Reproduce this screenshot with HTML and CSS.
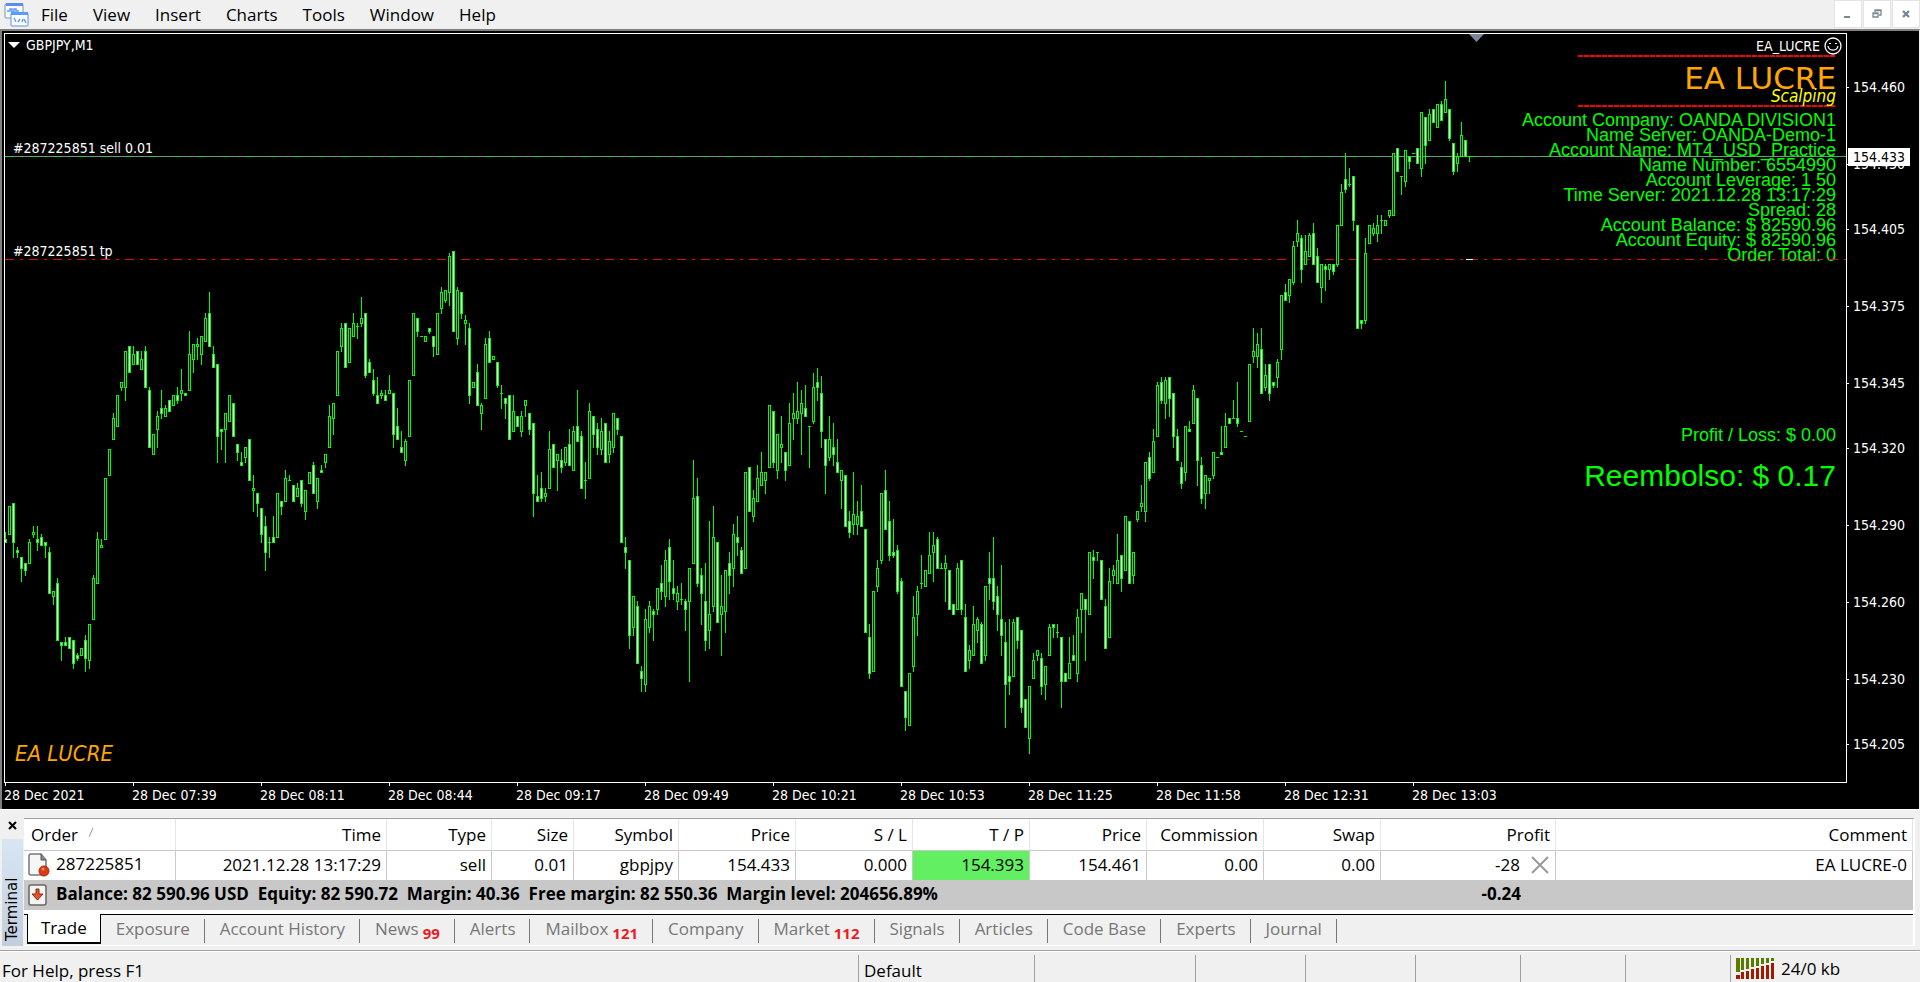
FILE: index.html
```html
<!DOCTYPE html>
<html lang="en">
<head>
<meta charset="utf-8">
<title>GBPJPY,M1</title>
<link rel="stylesheet" href="styles.css">
</head>
<body>
<div class="app">
  <header class="menubar">
    <svg class="app-icon" width="26" height="26" viewBox="0 0 26 26" aria-hidden="true">
      <rect x="1" y="2" width="18" height="14" rx="1" fill="#fff" stroke="#6f97a8"/>
      <path d="M2 1h17v3H2z" fill="#5b8def"/>
      <path d="M3 9h3v-2h2v3h2v-3h2v2h3" fill="none" stroke="#5b9bff" stroke-width="1.5"/>
      <rect x="7" y="11" width="17" height="13" rx="1" fill="#fff" stroke="#5b8def"/>
      <path d="M7 10h17v3H7z" fill="#5b9bff"/>
      <path d="M10 16l2 4M14 20l2-3M18 20l1-3M20 17l2 4" fill="none" stroke="#5b9bff" stroke-width="1.4"/>
    </svg>
    <nav class="menus">
      <button type="button">File</button>
      <button type="button">View</button>
      <button type="button">Insert</button>
      <button type="button">Charts</button>
      <button type="button">Tools</button>
      <button type="button">Window</button>
      <button type="button">Help</button>
    </nav>
    <div class="win-buttons">
      <button type="button" aria-label="Minimize"><svg width="10" height="10" viewBox="0 0 10 10"><path d="M1 7h6v2H1z" fill="#778899"/></svg></button>
      <button type="button" aria-label="Restore"><svg width="10" height="10" viewBox="0 0 10 10"><path d="M3 3V1h6v5H7M3 1.500h6" fill="none" stroke="#778899" stroke-width="1.300"/><path d="M1 4h5v4H1zM1 4.500h5" fill="none" stroke="#778899" stroke-width="1.300"/></svg></button>
      <button type="button" aria-label="Close"><svg width="10" height="10" viewBox="0 0 10 10"><path d="M2 2l6 6M8 2l-6 6" stroke="#778899" stroke-width="2.400"/></svg></button>
    </div>
  </header>

  <main class="chart">
    <div class="plot">
      <div class="chart-title"><svg width="12" height="6" viewBox="0 0 12 6" aria-hidden="true"><path d="M0 0h12l-6 6z" fill="#fff"/></svg>GBPJPY,M1</div>
      <span class="order-label order-open">#287225851 sell 0.01</span>
      <span class="order-label order-tp">#287225851 tp</span>
      <span class="brand">EA LUCRE</span>

      <section class="expert">
        <div class="expert-name">EA_LUCRE
          <svg width="18" height="18" viewBox="0 0 18 18" aria-hidden="true"><circle cx="9" cy="9" r="8" fill="none" stroke="#fff" stroke-width="1.300"/><path d="M5 6h2v1H5zM11 6h2v1h-2z" fill="#fff"/><path d="M4 9c1 5.500 9 5.500 10 0" fill="none" stroke="#fff" stroke-width="1.300"/></svg>
        </div>
        <div class="logo">
          <span class="logo-main">EA LUCRE</span>
          <span class="logo-sub">Scalping</span>
        </div>
        <ul class="facts">
          <li>Account Company: OANDA DIVISION1</li>
          <li>Name Server: OANDA-Demo-1</li>
          <li>Account Name: MT4_USD_Practice</li>
          <li>Name Number: 6554990</li>
          <li>Account Leverage: 1 50</li>
          <li>Time Server: 2021.12.28 13:17:29</li>
          <li>Spread: 28</li>
          <li>Account Balance: $ 82590.96</li>
          <li>Account Equity: $ 82590.96</li>
          <li>Order Total: 0</li>
        </ul>
      </section>
      <section class="result">
        <div class="profit">Profit / Loss: $ 0.00</div>
        <div class="refund">Reembolso: $ 0.17</div>
      </section>

      <svg class="candles" width="100%" height="100%" shape-rendering="crispEdges" role="img" aria-label="GBPJPY one minute candles">
        <line x1="0" x2="100%" y1="122.500" y2="122.500" stroke="#778899"/>
        <line x1="0" x2="100%" y1="122.500" y2="122.500" stroke="#32cd32" stroke-dasharray="9 6 3 6"/>
        <line x1="0" x2="100%" y1="225.500" y2="225.500" stroke="#e01010" stroke-dasharray="9 6 3 6"/>
        <path id="edges" fill="#00ff00"/>
        <path id="hollow" fill="#000"/>
        <path id="solid" fill="#fff"/>
        <path d="M1461 225h7v1h-7z" fill="#fff"/>
        <path d="M1464 0h15l-7.500 8z" fill="#778899" shape-rendering="auto"/>
      </svg>
    </div>
    <div class="price-axis" id="prices"></div>
    <div class="time-axis" id="times"></div>
  </main>

  <section class="terminal">
    <aside class="terminal-side">
      <button type="button" class="terminal-close" aria-label="Close terminal"><svg width="9" height="9" viewBox="0 0 9 9"><path d="M1 1l7 7M8 1l-7 7" stroke="#000" stroke-width="2"/></svg></button>
      <div class="terminal-title">Terminal</div>
    </aside>
    <div class="terminal-body">
      <table class="orders">
        <colgroup><col class="c-order"><col class="c-time"><col class="c-type"><col class="c-size"><col class="c-symbol"><col class="c-num"><col class="c-num"><col class="c-num"><col class="c-num"><col class="c-num"><col class="c-num"><col class="c-profit"><col></colgroup>
        <thead>
          <tr><th>Order <svg class="sort" width="5" height="9" viewBox="0 0 5 9" aria-hidden="true"><path d="M0 9l4-9" stroke="#999" fill="none"/></svg></th><th>Time</th><th>Type</th><th>Size</th><th>Symbol</th><th>Price</th><th>S / L</th><th>T / P</th><th>Price</th><th>Commission</th><th>Swap</th><th>Profit</th><th>Comment</th></tr>
        </thead>
        <tbody>
          <tr>
            <td><span class="cell-icon"><svg width="22" height="24" viewBox="0 0 22 24" aria-hidden="true"><path d="M1 3q0-2 2-2h10l5 6v13q0 2-2 2H3q-2 0-2-2z" fill="#f6f6f6" stroke="#777" stroke-width="1.500"/><path d="M13 1v6h5" fill="#888" stroke="#555"/><circle cx="16" cy="18" r="5" fill="#dc3a12" stroke="#a82a0c"/><circle cx="15" cy="16" r="1.500" fill="#f08a60"/></svg></span>287225851</td>
            <td>2021.12.28 13:17:29</td><td>sell</td><td>0.01</td><td>gbpjpy</td><td>154.433</td><td>0.000</td><td class="tp-hit">154.393</td><td>154.461</td><td>0.00</td><td>0.00</td>
            <td class="profit-cell">-28<button type="button" class="close-order" aria-label="Close order"><svg width="18" height="18" viewBox="0 0 18 18"><path d="M1 1l16 16M17 1L1 17" stroke="#999" stroke-width="2"/></svg></button></td>
            <td>EA LUCRE-0</td>
          </tr>
          <tr class="summary">
            <td colspan="11"><span class="cell-icon"><svg width="19" height="22" viewBox="0 0 19 22" aria-hidden="true"><rect x="1" y="1" width="17" height="20" rx="2" fill="#f4f4f4" stroke="#666" stroke-width="1.500"/><path d="M8 5h3v5h4l-5.500 6L4 10h4z" fill="#e2572a" stroke="#8c2a0c"/></svg></span><span class="balance">Balance: 82 590.96 USD  Equity: 82 590.72  Margin: 40.36  Free margin: 82 550.36  Margin level: 204656.89%</span></td>
            <td class="profit-cell">-0.24</td><td></td>
          </tr>
        </tbody>
      </table>
      <div class="tabs" role="tablist">
        <button type="button" role="tab" class="active" aria-selected="true">Trade</button>
        <button type="button" role="tab">Exposure</button>
        <button type="button" role="tab">Account History</button>
        <button type="button" role="tab">News<b>99</b></button>
        <button type="button" role="tab">Alerts</button>
        <button type="button" role="tab">Mailbox<b>121</b></button>
        <button type="button" role="tab">Company</button>
        <button type="button" role="tab">Market<b>112</b></button>
        <button type="button" role="tab">Signals</button>
        <button type="button" role="tab">Articles</button>
        <button type="button" role="tab">Code Base</button>
        <button type="button" role="tab">Experts</button>
        <button type="button" role="tab">Journal</button>
      </div>
    </div>
  </section>

  <footer class="status">
    <span class="s-help">For Help, press F1</span>
    <span class="s-profile">Default</span>
    <span class="s-time"></span>
    <span class="s-wide"></span>
    <span class="s-wide"></span>
    <span class="s-cell"></span>
    <span class="s-cell"></span>
    <span class="s-cell"></span>
    <span class="s-net">
      <svg width="38" height="21" viewBox="0 0 38 21" aria-hidden="true">
        <path d="M0 0h4v14H0zM5 0h3v12H5zM10 0h3v11h-3zM15 0h3v9h-3zM20 0h3v8h-3zM25 0h3v6h-3zM30 0h3v5h-3zM35 0h3v3h-3z" fill="#5a7a00"/>
        <path d="M0 17h4v4H0zM5 14h3v7H5zM10 13h3v8h-3zM15 11h3v10h-3zM20 10h3v11h-3zM25 8h3v13h-3zM30 7h3v14h-3zM35 5h3v16h-3z" fill="#a01a00"/>
      </svg>
      24/0 kb
    </span>
  </footer>
</div>
<script src="chart.js"></script>
</body>
</html>
```

FILE: styles.css
```css
* { box-sizing: border-box; }

body {
  margin: 0;
  background: #f0f0f0;
  color: #000;
  font: 17px/24px "Open Sans", "Noto Sans", sans-serif;
}

button {
  margin: 0;
  padding: 0;
  border: 0;
  background: none;
  color: inherit;
  font: inherit;
}

svg { flex: none; }

.app {
  display: flex;
  flex-direction: column;
  min-height: 100vh;
}

/* Menu bar */
.menubar {
  display: flex;
  height: 29px;
  align-items: center;
  padding-left: 4px;
}

.app-icon { margin-right: 11px; }

.menus {
  display: flex;
  flex: 1;
  gap: 25px;
}

.win-buttons {
  display: flex;
  align-self: flex-start;
  gap: 1px;
}

.win-buttons button {
  display: grid;
  place-items: center;
  width: 28px;
  height: 28px;
  border: 1px solid #e3e3e3;
  background: #fff;
}

/* Chart window */
.chart {
  display: grid;
  flex: 1;
  grid-template: 1fr 26px / 1fr 72px;
  min-height: 600px;
  padding: 2px 0 0 2px;
  border-top: 2px solid #808080;
  border-left: 2px solid #808080;
  border-right: 1px solid #f0f0f0;
  background: #000;
  color: #fff;
  font: 14px/18px "DejaVu Sans Condensed", "Noto Sans", sans-serif;
}

.plot {
  position: relative;
  overflow: hidden;
  border: 1px solid #fff;
}

.candles {
  position: absolute;
  inset: 0;
  pointer-events: none;
}

.chart-title {
  display: flex;
  align-items: center;
  gap: 6px;
  padding: 2px 3px;
}

.order-label {
  position: absolute;
  left: 8px;
}

.order-open { top: 105px; }
.order-tp { top: 208px; }

.brand {
  position: absolute;
  left: 10px;
  bottom: 13px;
  color: #ffa500;
  font: italic 22px/30px "DejaVu Sans Condensed", sans-serif;
}

.expert {
  position: absolute;
  top: 3px;
  right: 10px;
  display: flex;
  flex-direction: column;
  align-items: flex-end;
}

.expert-name {
  display: flex;
  align-items: center;
  gap: 4px;
  margin-right: -6px;
}

.logo {
  position: relative;
  display: flex;
  justify-content: flex-end;
  width: 258px;
  height: 52px;
  background:
    repeating-linear-gradient(90deg, #f00 0 5px, transparent 5px 6px) 0 0 / 100% 2px no-repeat,
    repeating-linear-gradient(90deg, #f00 0 5px, transparent 5px 6px) 0 100% / 100% 2px no-repeat;
}

.logo-main {
  color: #ffa500;
  font: 31px/46px "DejaVu Sans", sans-serif;
}

.logo-sub {
  position: absolute;
  right: 0;
  bottom: 0;
  color: #ff0;
  font: italic 17px/22px "DejaVu Sans Condensed", sans-serif;
}

.facts {
  margin: 6px 0 0;
  padding: 0;
  list-style: none;
  color: #0f0;
  font: 18px/15px "Liberation Sans", sans-serif;
  text-align: right;
}

.result {
  position: absolute;
  top: 390px;
  right: 10px;
  color: #0f0;
  font: 18px/22px "Liberation Sans", sans-serif;
  text-align: right;
}

.refund {
  margin-top: 13px;
  font-size: 30px;
  line-height: 34px;
}

.price-axis { position: relative; }

.price {
  position: absolute;
  left: 0;
  display: flex;
  align-items: center;
  gap: 4px;
}

.price::before {
  width: 2px;
  height: 1px;
  background: #fff;
  content: "";
}

.bid {
  position: absolute;
  left: 1px;
  width: 62px;
  padding-left: 5px;
  background: #fff;
  color: #000;
}

.time-axis {
  display: flex;
  grid-column: 1 / -1;
  overflow: hidden;
  white-space: nowrap;
}

.time-axis span {
  flex: none;
  width: 128px;
}

.time-axis span::before {
  display: block;
  width: 1px;
  height: 3px;
  margin-left: 1px;
  background: #fff;
  content: "";
}

/* Terminal */
.terminal {
  display: flex;
  height: 137px;
  padding: 8px 5px 0 2px;
  border-top: 1px solid #fff;
}

.terminal-side {
  display: flex;
  flex-direction: column;
  width: 22px;
  padding-right: 1px;
}

.terminal-close {
  display: grid;
  place-items: start center;
  height: 21px;
  padding-top: 3px;
}

.terminal-title {
  flex: 1;
  padding-top: 5px;
  background: linear-gradient(#c2cedd, #d8e6f4);
  font: 15px/21px "DejaVu Sans", sans-serif;
  transform: rotate(180deg);
  writing-mode: vertical-rl;
}

.terminal-body {
  flex: 1;
  min-width: 0;
  border-top: 1px solid #a0a0a0;
  border-right: 2px solid #fff;
  border-bottom: 1px solid #fff;
}

.orders {
  width: 100%;
  border-collapse: separate;
  border-spacing: 0;
  background: #fff;
  table-layout: fixed;
  white-space: nowrap;
}

.c-order { width: 152px; }
.c-time { width: 211px; }
.c-type { width: 105px; }
.c-size { width: 82px; }
.c-symbol { width: 105px; }
.c-num { width: 117px; }
.c-profit { width: 175px; }

.orders th,
.orders td {
  padding: 0 5px;
  font-weight: 400;
  text-align: right;
}

.orders th {
  height: 32px;
  border-right: 1px solid #e5e5e5;
  border-bottom: 1px solid #c8c8c8;
}

.orders td {
  height: 29px;
  padding-bottom: 2px;
  border-right: 1px solid #c8c8c8;
}

.orders th:first-child,
.orders td:first-child { text-align: left; }

.orders th:first-child { padding-left: 7px; }
.orders td:first-child { padding-left: 4px; }

.sort {
  margin: 0 0 4px 7px;
}

.cell-icon {
  display: inline-flex;
  width: 28px;
  vertical-align: middle;
}

.orders td.tp-hit { background: #62f062; }

.orders td.profit-cell { padding-right: 35px; position: relative; }

.close-order {
  position: absolute;
  top: 5px;
  right: 6px;
  display: flex;
}

.orders .summary td {
  height: 30px;
  border: 0;
  background: #c8c8c8;
  font-weight: 700;
}

.balance { white-space: pre; }

.tabs {
  display: flex;
  height: 34px;
  padding: 4px 0 0 3px;
  background: linear-gradient(#fff 4px, #000 4px 5px, transparent 5px);
  color: #777;
}

.tabs button {
  position: relative;
  height: 30px;
  padding: 0 15px;
}

.tabs button + button::after {
  position: absolute;
  top: 5px;
  right: 0;
  width: 1px;
  height: 24px;
  background: #777;
  content: "";
}

.tabs .active {
  padding: 0 13px;
  border: solid #000;
  border-width: 0 1px 2px;
  background: #fff;
  color: #000;
}

.tabs b {
  position: relative;
  top: 4px;
  margin-left: 4px;
  color: #ed1c24;
  font-size: 15px;
  line-height: 16px;
}

/* Status bar */
.status {
  display: flex;
  height: 32px;
  margin-top: 4px;
  padding-top: 4px;
  border-top: 1px solid #a0a0a0;
  box-shadow: inset 0 1px #fff;
}

.status span {
  padding-left: 5px;
  border-left: 1px solid #a0a0a0;
  line-height: 31px;
}

.status .s-help {
  flex: 1;
  padding-left: 2px;
  border-left: 0;
}

.s-profile { width: 176px; }
.s-time { width: 161px; }
.s-wide { width: 110px; }
.s-cell { width: 105px; }

.s-net {
  display: flex;
  align-items: center;
  gap: 7px;
  width: 190px;
}
```

FILE: chart.js
```js
// Each run starts at candle `at`; y values are thirds of a pixel below `base`.
// Row: kind, body top, body bottom, high, low. u = rising, d = falling, x = doji.
const runs = [
  { at: 0, base: 446, rows: `d177 189 156;u78 165;d69 189 69 234;d210 219 201 234;d231 267 231 306;d249 273 249 288;u186 252 177;u156 165 138 174;d177 189 138 213;d171 198 162;d186 198 186 234;d216 342 201;u333 351 333 375;d309 483 294;d486 498 486 543;d486 498 471;d471 507;d480 552 480 567;d525 537 519 543;u504 528;d480 537 465 576;u432 543 432 567;u294 420 285;u177 312 156;u195 204 177` },
  { at: 25, base: 166, rows: `u834 1020;u747 828;u654 720 639;u585 681;u546 564 546 573;u453 564 453 603;d438 519;u462 495 438;d453 495;u477 510 453;d453 564 438;d570 744 561;u702 765;u648 690 633 744;d624 642 570 657;u624 651 615;d600 636;u585 618;d585 603 561 612;u570 582 507 603;d579 588;u462 573 393;u432 480 432 519;u432 441 414 480;u408 465 408 495;u354 426 339;d339 441 276;d462 504 438;d492 711 492 789;d687 696 687 750;u639 690 639 789;u585 666;d609 711;d732 759 732 783;d786 798 756;u741 774 741 789;d717 843;u864 873 825 936;d879 912 879 951;d924 1005 924 1029;d978 1059 948 1113;x1026 1029 1011 1074;d1011 1029 948;u879 1014;d903 921 903 945;u834 906 810;x840 843 825;d855 906;u864 891 849;d840 912 840 921;u870 936 870 960` },
  { at: 76, base: 206, rows: `u696 732;d675 762 666;u714 786 714 807;d690 699 675;u642 669 642 684;u528 624 495;u489 537 489 585;u333 468;u264 321 249 336;d249 384;u264 369;u249 291 219;x258 261 249 297;u234 252 171 261;d219 408 219 414;d366 399 357;d420 462 387 468;d465 492 411;u459 468 450 477;d465 483 450;u450 462 405;d459 585 459 624;d558 600 504;d621 639 573;u603 663 597 678;u420 591;u219 408;d234 276 234 291;x288 291;u288 306;d264 276 264 282;d288 321 288 351;u219 345;u156 207 141 222;u150 183 150 189;u48 159 39 198;d33 276;u150 297 141 315;d156 222 156 237;u240 252 225 315;d264 468 249 492;u426 444;d396 498 372;u495 522 489 570;u312 477 294;d294 369 273;u348 360;d366 438 366 444;x459 462 435 507;d474 492 474 537;d465 600;u513 576 465;d528 561;u528 576 513 591;u480 498 480 531;d519 570 519 585;d549 762 549 831;d768 786 705;d744 777 696 786;u759 771 744 786;u627 747 573;d612 684;u642 663 642 753;d660 684 627 699;u621 669 621 678;d612 678 567;u573 693 558;d558 606 450;d588 747 573;x720 723 666 777;u513 717 489;d528 585 528 624;d567 624 549 645;u573 630 534 645;d549 669;u603 645 573 669;u519 624 519 639;d534 570 534 585` },
  { at: 154, base: 346, rows: `d168 489;d501 519 471 567;d540 768 540 807;u648 744 648 768;d678 852 663;d873 897 858 936;u717 915 687 936;u678 744 663 759;d693 705 687 783;u624 690 624 705;d609 636 555 660;u540 651 510 681;d501 606 477 660;d624 642 540 660;u639 666 618 690;x657 660 609 675;d663 690 657 753;u564 666 564 906;u354 552 240;d348 612 294 621;d585 642 564 735;d663 783 549 813;u702 753 423 807;u471 681 378 696;d486 729;u678 705 585 828;u570 696 570 759;d549 588 516 642;u462 567 432 621;d471 489 408 528;d510 582 501;u276 567;d261 396;u354 411 330 426;u294 366 255;u276 318 216;u276 303 276 342;u75 264;d93 249 93 264;u162 273 162 297;u192 204 108 249;d216 273 216 303;u129 258 69;u99 117 39 180;u93 117 6 132;u69 102 30 225;d84 111 15;x138 141 138 264;u21 126 -21 132;d6 24 -36 63;d39 156 -12 204;d177 258 177 342;u177 234 108 243;d201 225 129 258;d246 279 177;u270 303 270 387;d285 441;d423 459 393 474;u402 435 276 465;u408 435 363 465;d393 441 315;d447 759;d771 882 732 897;u633 876;u564 621 540 636;u339 543 339 552;d330 450 270;d423 528 363 543;d516 528 417 534;d510 636 495 642` },
  { at: 224, base: 346, rows: `d603 921 594;d933 1014 933 1053;u879 1038;u711 861 648 876;u633 705 618 768;x609 612 525 627;u570 621;u525 582 456;u495 519 456 606;d477 567 471;x564 567 549;u549 567 525 666;d570 690;d672 705;u564 690 549;d540 690 540 705;d711 876 672;u810 843 795 867;u732 828 678;u717 753 711 789;d732 852 726;u618 828 618 843;d594 612 516 660;d594 666 471 690;d648 705 618 753;d717 768 555 828;d786 915 726 1044;d888 906 717 945;u726 891 717;d711 783 711 807;d750 984 750 999;d957 1044;u918 1077 918 1122;u840 897 819;u810 828 810 843;d834 921 819 945;u858 915 858 960;u741 828 732;d732 744 732 774;x756 759 732 774;d771 906 771 984;d879 906;u849 897 771;d825 843 765;u711 882 687 906;u639 690 639 759;d657 690 657 843;u516 705;d531 543 510 597;x516 519 516 543;d540 660;d678 807 657;u603 774 564;u570 588 555 612;u540 612 462;d525 597 525 636;u408 573;d423 612;u516 588 516 612;u393 420 393 426;u369 381 315 396;u246 396 246 426;d231 297 216 303;u183 279 147;u15 171 6;d6 63 -9 72;u0 72 -9 117;d-9 57 -9 111;d39 171 39 204;d168 243 147;d261 312 246 327` },
  { at: 295, base: 36, rows: `u1068 1209 1068 1233;d1077 1086 1053;u960 1062 945;d984 1173 984 1248;d1185 1287 1161 1302;u1215 1272 1215 1317;u1224 1233 1224 1272;u1146 1218 1146 1227;x1161 1164;d1146 1155 1068;u1068 1134 1029;d1044 1062;x1044 1047 990;d1044 1062 936 1071;x1083 1086;x1098 1101;u882 1056;u843 861 774 879;u822 861 789 894;d837 972 774;u915 954 882 963;d882 972 882 993;d936 948 936 954;u876 924 867 954;u675 840 675 870;d666 693 642;u627 678 627 699;u528 639 513 645;u489 516 450 531;d504 600 495 639;u543 585 495;u495 561 489;d489 585 459;d558 639 534;u582 654 582 699;d588 600 582 663;u582 600 582 630;d582 606 582 615;u465 585 465 591;u366 468 342;d327 360 249 369;x342 345 294 351;d318 453 318 483;d465 777;d750 762 750 777;u549 753 504 762;u465 522;u474 492 459 498;u465 492 435 516;x450 453 435 492;u450 468;u420 438 420 444;u249 438;d234 306;x318 321 318 375;u240 336 240 351;d258 276 258 297;x249 252;d234 282;u126 297 126 321;d141 228 141 282;u132 213 117;d117 159;u102 174;d102 153 93;u87 129 33;d117 207 117 213;d219 306 219 315;u258 282 249 306;u195 261 156;d210 261;x258 261 258 276` }
];

const STEP = 4;
const paths = { edges: "", u: "", d: "" };
const box = (x, y, w, bottom) => `M${x} ${y}h${w}V${bottom}h${-w}z`;

for (const run of runs) {
  run.rows.split(";").forEach((row, i) => {
    const kind = row[0];
    const [top, bottom, high, low] = row.slice(1).split(" ").map(v => run.base + Number(v) / 3);
    const x = (run.at + i) * STEP;
    paths.edges += box(x, high ?? top, 1, top) + box(x, bottom, 1, low ?? bottom) + box(x - 1, top, 3, bottom);
    if (kind !== "x") paths[kind] += box(x, top + 1, 1, bottom - 1);
  });
}
document.getElementById("edges").setAttribute("d", paths.edges);
document.getElementById("hollow").setAttribute("d", paths.u);
document.getElementById("solid").setAttribute("d", paths.d);

// Price scale
const priceY = price => Math.round(54 + (154.46 - price) * 2576);
const axis = document.getElementById("prices");
const addPrice = (price, className) => {
  const label = document.createElement("span");
  label.className = className;
  label.textContent = price.toFixed(3);
  label.style.top = `${priceY(price) - 9}px`;
  axis.append(label);
};
[154.46, 154.43, 154.405, 154.375, 154.345, 154.32, 154.29, 154.26, 154.23, 154.205].forEach(p => addPrice(p, "price"));
addPrice(154.433, "bid");

// Time scale
const times = document.getElementById("times");
["2021", "07:39", "08:11", "08:44", "09:17", "09:49", "10:21", "10:53", "11:25", "11:58", "12:31", "13:03"].forEach(t => {
  const label = document.createElement("span");
  label.textContent = `28 Dec ${t}`;
  times.append(label);
});
```
